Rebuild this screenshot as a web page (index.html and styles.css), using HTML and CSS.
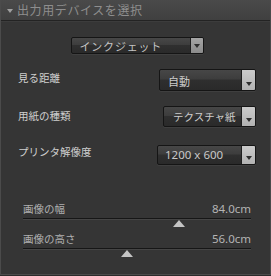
FILE: index.html
```html
<!DOCTYPE html>
<html lang="ja">
<head>
    <meta charset="UTF-8">
    <title>出力用デバイスを選択</title>
    <link rel="stylesheet" href="styles.css">
</head>
<body>
    <div class="panel">
        <div class="panel-header">
            <span class="caret"></span>
            <span class="title">出力用デバイスを選択</span>
        </div>
        <div class="panel-body">
            <div class="row center">
                <div class="select select-device">
                    <span class="select-text">インクジェット</span>
                    <span class="select-btn"><i></i></span>
                </div>
            </div>
            <div class="row row-distance">
                <span class="label">見る距離</span>
                <div class="select select-distance">
                    <span class="select-text">自動</span>
                    <span class="select-btn low"><i></i></span>
                </div>
            </div>
            <div class="row row-paper">
                <span class="label">用紙の種類</span>
                <div class="select select-paper">
                    <span class="select-text">テクスチャ紙</span>
                    <span class="select-btn low"><i></i></span>
                </div>
            </div>
            <div class="row row-res">
                <span class="label">プリンタ解像度</span>
                <div class="select select-res">
                    <span class="select-text">1200 x 600</span>
                    <span class="select-btn low"><i></i></span>
                </div>
            </div>

            <div class="slider slider-first">
                <div class="slider-head">
                    <span>画像の幅</span>
                    <span>84.0cm</span>
                </div>
                <div class="slider-track"></div>
                <div class="slider-area">
                    <span class="thumb" style="left: 68.4%"></span>
                </div>
            </div>
            <div class="slider">
                <div class="slider-head">
                    <span>画像の高さ</span>
                    <span>56.0cm</span>
                </div>
                <div class="slider-track"></div>
                <div class="slider-area">
                    <span class="thumb" style="left: 45.6%"></span>
                </div>
            </div>
        </div>
    </div>
</body>
</html>
```

FILE: styles.css
```css
* {
    margin: 0;
    padding: 0;
    box-sizing: border-box;
}

body {
    background-color: #2c2c2c;
    font-family: "Noto Sans", "Noto Sans CJK JP", sans-serif;
    width: 271px;
    height: 276px;
    overflow: hidden;
}

.panel {
    width: 271px;
    height: 275px;
    background-color: #353535;
    border: 1px solid #4b4b4b;
    border-top: none;
}

.panel-header {
    height: 21px;
    display: flex;
    align-items: center;
    padding-left: 6px;
    background: linear-gradient(#4a4a4a, #404040);
    border-bottom: 1px solid #232323;
    box-shadow: 0 1px 0 #3c3c3c;
}

.caret {
    width: 0;
    height: 0;
    border-left: 3.5px solid transparent;
    border-right: 3.5px solid transparent;
    border-top: 4px solid #a0a0a0;
    margin-right: 4px;
    margin-top: 1px;
}

.title {
    color: #8e8e8e;
    font-size: 12px;
    letter-spacing: 0.6px;
}

.panel-body {
    padding: 0 14px 0 16px;
}

.row {
    display: flex;
    align-items: center;
    justify-content: space-between;
}

.row.center {
    justify-content: center;
    margin-top: 16px;
    padding-left: 1px;
}

.row-distance {
    margin-top: 15px;
}

.row-paper {
    margin-top: 15px;
}

.row-res {
    margin-top: 17px;
}

.label {
    color: #cfcfcf;
    font-size: 10.5px;
    padding-left: 1px;
    padding-bottom: 5px;
}

.row-paper .label {
    padding-bottom: 2px;
}

.row-res .label {
    padding-bottom: 6px;
}

.select {
    display: flex;
    align-items: stretch;
    border: 1px solid #151515;
    border-radius: 2px;
    background: linear-gradient(#474747, #3d3d3d 45%, #2f2f2f 50%, #2a2a2a);
    box-shadow: 0 1px 0 #3f3f3f;
    overflow: hidden;
}

.select-text {
    flex: 1;
    display: flex;
    align-items: center;
    color: #cdcdcd;
    font-size: 11px;
    padding-left: 8px;
    white-space: nowrap;
}

.select-btn {
    width: 13px;
    display: flex;
    align-items: center;
    justify-content: center;
    background: linear-gradient(#a5a5a5, #8c8c8c);
    border-left: 1px solid #1e1e1e;
}

.select-btn.low {
    width: 14px;
    align-items: flex-end;
    padding-bottom: 4px;
    background: linear-gradient(#cacaca, #b2b2b2);
}

.select-btn i {
    width: 0;
    height: 0;
    border-left: 3.5px solid transparent;
    border-right: 3.5px solid transparent;
    border-top: 4px solid #2e2e2e;
}

.select-device {
    width: 133px;
    height: 17px;
}

.select-device .select-text {
    color: #c4c4c4;
    letter-spacing: 0.8px;
}

.select-distance {
    width: 97px;
    height: 22px;
}

.select-distance .select-text {
    padding-top: 2px;
}

.select-paper {
    width: 93px;
    height: 21px;
}

.select-paper .select-text {
    padding-left: 9px;
    font-size: 10.5px;
}

.select-res {
    width: 99px;
    height: 20px;
}

.select-res .select-text {
    padding-left: 7px;
    font-size: 11.5px;
    color: #c8c8c8;
}

.slider {
    margin: 0 5px 0 6px;
}

.slider-first {
    margin-top: 36px;
}

.slider-head {
    display: flex;
    justify-content: space-between;
    align-items: center;
    height: 14px;
    color: #b0b0b0;
    font-size: 10.5px;
}

.slider-head span:last-child {
    font-size: 11.5px;
    color: #b4b4b4;
}

.slider-track {
    margin-top: 3px;
    height: 1px;
    background-color: #161616;
    box-shadow: 0 1px 0 #454545;
}

.slider-area {
    position: relative;
    height: 12px;
}

.thumb {
    position: absolute;
    top: 1px;
    width: 0;
    height: 0;
    margin-left: -6px;
    border-left: 6px solid transparent;
    border-right: 6px solid transparent;
    border-bottom: 7px solid #c4c4c4;
}
```
